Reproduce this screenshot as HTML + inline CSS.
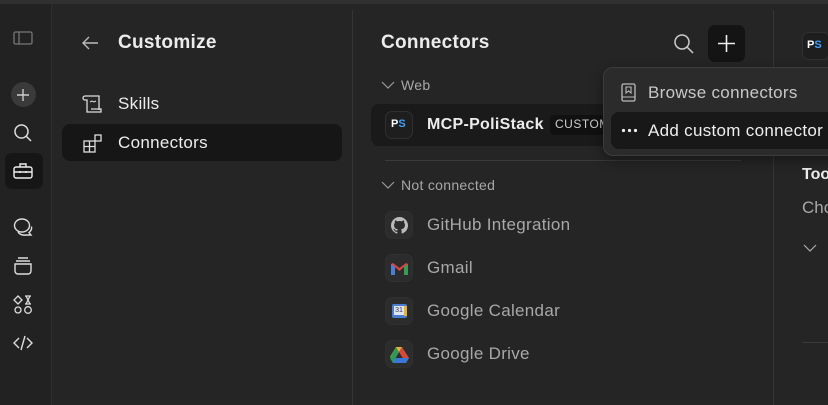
<!DOCTYPE html>
<html><head><meta charset="utf-8"><style>
*{box-sizing:border-box;margin:0;padding:0}
body{width:828px;height:405px;overflow:hidden;background:#252525;font-family:"Liberation Sans",sans-serif;color:#ececec;position:relative}
.top{position:absolute;left:0;top:0;width:828px;height:4px;background:#303030}
.rail{position:absolute;left:0;top:4px;width:52px;height:401px;background:#222222;border-right:1px solid #2e2e2e}
.vline{position:absolute;top:10px;width:1px;height:395px;background:#353535}
.abs{position:absolute}
.sel{position:absolute;left:62px;top:124px;width:280px;height:37px;background:#161616;border-radius:8px}
.t{position:absolute;white-space:nowrap}
.logo{position:absolute;left:385px;width:28px;height:28px;border-radius:7px;background:#2c2c2c;border:1px solid #303030}
.gray{color:#a8a8a8}
</style></head><body>
<div class="top"></div>
<div class="rail"></div>
<div class="vline" style="left:352px"></div>
<div class="vline" style="left:773px"></div>
<svg class="abs" style="left:13px;top:31px" width="20" height="15"><rect x="1" y="1" width="18" height="12" rx="1.5" fill="none" stroke="#777" stroke-width="1.3"/><line x1="6" y1="1" x2="6" y2="13" stroke="#777" stroke-width="1.3"/></svg>
<div class="abs" style="left:11px;top:82px;width:25px;height:25px;border-radius:50%;background:#3a3a3a"></div>
<svg class="abs" style="left:15px;top:87px" width="16" height="16"><path d="M8 2v12M2 8h12" stroke="#ccc" stroke-width="1.4"/></svg>
<svg class="abs" style="left:13px;top:123px" width="20" height="20"><circle cx="8.5" cy="8.5" r="6.5" fill="none" stroke="#ddd" stroke-width="1.5"/><path d="M13 13l5 5" stroke="#ddd" stroke-width="1.5"/></svg>
<div class="abs" style="left:5px;top:153px;width:38px;height:36px;background:#161616;border-radius:7px"></div>
<svg class="abs" style="left:13px;top:162px" width="20" height="18"><rect x="1" y="5" width="18" height="11" rx="2" fill="none" stroke="#eee" stroke-width="1.4"/><path d="M7 5V2h6v3M1 10h18M7 9v2M13 9v2" stroke="#eee" stroke-width="1.4" fill="none"/></svg>
<svg class="abs" style="left:13px;top:217px" width="21" height="21"><ellipse cx="9" cy="8.5" rx="7.5" ry="6.5" fill="none" stroke="#ddd" stroke-width="1.4"/><path d="M5 14.5c1 3 5 4 8 3.5h5l-2-2.5c2-1.5 3-3.5 2.5-6" fill="none" stroke="#ddd" stroke-width="1.4"/></svg>
<svg class="abs" style="left:13px;top:256px" width="20" height="20"><path d="M5 2h10M3 5h14M2 8h16v7a3 3 0 0 1-3 3H5a3 3 0 0 1-3-3z" fill="none" stroke="#ddd" stroke-width="1.4"/></svg>
<svg class="abs" style="left:13px;top:295px" width="20" height="20"><path d="M5 1l4 4-4 4-4-4z M12 1h6M12 9h6M13 1l2 4-2 4M17 1l-2 4 2 4" fill="none" stroke="#ddd" stroke-width="1.3"/><circle cx="5" cy="15" r="3" fill="none" stroke="#ddd" stroke-width="1.3"/><circle cx="15" cy="15" r="3.3" fill="none" stroke="#ddd" stroke-width="1.3"/></svg>
<svg class="abs" style="left:13px;top:335px" width="20" height="16"><path d="M6 3L1 8l5 5M14 3l5 5-5 5M12 1L8 15" fill="none" stroke="#ddd" stroke-width="1.4"/></svg>
<svg class="abs" style="left:81px;top:35px" width="18" height="16"><path d="M17 8H2M8 2L2 8l6 6" fill="none" stroke="#bbb" stroke-width="1.4"/></svg>
<div class="t" style="left:118px;top:32px;font-size:19px;font-weight:bold;letter-spacing:.3px">Customize</div>
<svg class="abs" style="left:82px;top:94px" width="21" height="20"><path d="M3 2h14v14M3 2a2 2 0 0 0 0 4h2v12h14v-3H9" fill="none" stroke="#ddd" stroke-width="1.3"/><path d="M8 8l2-1 2 1 2-1" fill="none" stroke="#ddd" stroke-width="1"/></svg>
<div class="t" style="left:118px;top:94px;font-size:17px;letter-spacing:.3px">Skills</div>
<div class="sel"></div>
<svg class="abs" style="left:83px;top:134px" width="19" height="19"><rect x="1" y="7" width="11" height="11" fill="none" stroke="#ddd" stroke-width="1.3"/><path d="M1 12.5h11M6.5 7v11" stroke="#ddd" stroke-width="1.3"/><rect x="12" y="1" width="6" height="6" fill="none" stroke="#ddd" stroke-width="1.3"/></svg>
<div class="t" style="left:118px;top:133px;font-size:17px;letter-spacing:.3px">Connectors</div>
<div class="t" style="left:381px;top:32px;font-size:19px;font-weight:bold;letter-spacing:.3px">Connectors</div>
<svg class="abs" style="left:673px;top:33px" width="22" height="22"><circle cx="9" cy="9" r="7" fill="none" stroke="#ccc" stroke-width="1.5"/><path d="M14 14l6 6" stroke="#ccc" stroke-width="1.5"/></svg>
<div class="abs" style="left:708px;top:25px;width:37px;height:37px;background:#141414;border-radius:7px"></div>
<svg class="abs" style="left:716px;top:33px" width="21" height="21"><path d="M10.5 2v17M2 10.5h17" stroke="#eee" stroke-width="1.6"/></svg>
<svg class="abs" style="left:381px;top:80px" width="14" height="10"><path d="M1 2l6 6 6-6" fill="none" stroke="#999" stroke-width="1.2"/></svg>
<div class="t gray" style="left:401px;top:77px;font-size:14px;letter-spacing:.3px">Web</div>
<div class="abs" style="left:371px;top:104px;width:260px;height:42px;background:#1a1a1a;border-radius:8px"></div>
<div class="logo" style="top:111px;background:#1e1e1e"><div class="t" style="left:5px;top:6px;font-size:11px;font-weight:bold;color:#fff">P<span style="color:#3ea0ff">S</span></div></div>
<div class="t" style="left:427px;top:116px;font-size:16px;font-weight:bold;letter-spacing:.3px">MCP-PoliStack</div>
<div class="abs" style="left:550px;top:115px;width:60px;height:20px;background:#111;border-radius:4px"></div>
<div class="t" style="left:555px;top:117px;font-size:12px;color:#ccc;letter-spacing:.5px">CUSTOM</div>
<div class="abs" style="left:385px;top:160px;width:356px;height:1px;background:#3a3a3a"></div>
<svg class="abs" style="left:381px;top:180px" width="14" height="10"><path d="M1 2l6 6 6-6" fill="none" stroke="#999" stroke-width="1.2"/></svg>
<div class="t gray" style="left:401px;top:177px;font-size:14px;letter-spacing:.3px">Not connected</div>
<div class="logo" style="top:211px"><svg style="position:absolute;left:5px;top:5px" width="17" height="17" viewBox="0 0 16 16"><path fill="#bbb" d="M8 0C3.6 0 0 3.6 0 8c0 3.5 2.3 6.5 5.5 7.6.4.1.5-.2.5-.4v-1.4c-2.2.5-2.7-1-2.7-1-.4-.9-.9-1.2-.9-1.2-.7-.5.1-.5.1-.5.8.1 1.2.8 1.2.8.7 1.200 1.9.9 2.3.7.1-.5.3-.9.5-1.1-1.8-.2-3.6-.9-3.6-4 0-.9.3-1.6.8-2.1-.1-.2-.4-1 .1-2.1 0 0 .7-.2 2.2.8.6-.2 1.3-.3 2-.3s1.4.1 2 .3c1.5-1 2.2-.8 2.2-.8.4 1.1.2 1.9.1 2.1.5.6.8 1.3.8 2.1 0 3.1-1.9 3.7-3.6 3.9.3.3.5.8.5 1.5v2.2c0 .2.1.5.6.4C13.7 14.5 16 11.5 16 8c0-4.4-3.6-8-8-8z"/></svg></div>
<div class="t gray" style="left:427px;top:215px;font-size:17px;letter-spacing:.3px">GitHub Integration</div>
<div class="logo" style="top:254px"><svg style="position:absolute;left:5px;top:7px" width="17" height="13"><path d="M0 2v11h4V5l4.5 4L13 5v8h4V2l-2-1-6.5 5L2 1z" fill="#d44"/><path d="M0 2v11h4V5z" fill="#4a7fd8"/><path d="M13 5v8h4V2z" fill="#3a9a5a"/></svg></div>
<div class="t gray" style="left:427px;top:258px;font-size:17px;letter-spacing:.3px">Gmail</div>
<div class="logo" style="top:297px"><div class="abs" style="left:6px;top:6px;width:15px;height:14px;background:#4a7cd0;border-radius:2px"></div><div class="abs" style="left:8px;top:8px;width:10px;height:9px;background:#dfe6f0;font-size:7px;color:#335;text-align:center;line-height:9px">31</div><div class="abs" style="left:18px;top:8px;width:3px;height:10px;background:#e8b33a"></div></div>
<div class="t gray" style="left:427px;top:301px;font-size:17px;letter-spacing:.3px">Google Calendar</div>
<div class="logo" style="top:340px"><svg style="position:absolute;left:4px;top:6px" width="19" height="16"><path d="M6 0h6l-6 10H0z" fill="#e8b33a"/><path d="M12 0l7 11-3 5-7-11z" fill="#d4493a"/><path d="M0 11l3 5h13l3-5z" fill="#3a78d8"/><path d="M6 0L0 11l3 5 6-11z" fill="#2e9a5a"/></svg></div>
<div class="t gray" style="left:427px;top:344px;font-size:17px;letter-spacing:.3px">Google Drive</div>
<div class="logo" style="left:802px;top:32px;background:#1e1e1e"><div class="t" style="left:4px;top:6px;font-size:11px;font-weight:bold;color:#fff">P<span style="color:#3ea0ff">S</span></div></div>
<div class="t" style="left:802px;top:166px;font-size:16px;font-weight:bold">Tools</div>
<div class="t gray" style="left:802px;top:198px;font-size:17px">Choose</div>
<svg class="abs" style="left:803px;top:243px" width="14" height="10"><path d="M1 2l6 6 6-6" fill="none" stroke="#aaa" stroke-width="1.2"/></svg>
<div class="abs" style="left:802px;top:342px;width:26px;height:1px;background:#3a3a3a"></div>
<div class="abs" style="left:603px;top:67px;width:240px;height:89px;background:#2b2b2b;border:1px solid #3c3c3c;border-radius:10px;box-shadow:0 4px 12px rgba(0,0,0,.4)"></div>
<svg class="abs" style="left:621px;top:83px" width="16" height="20"><rect x="1" y="1" width="13" height="17" rx="1.5" fill="none" stroke="#bbb" stroke-width="1.3"/><path d="M1 14h13M5 4v6l2.5-2 2.5 2V4z" fill="none" stroke="#bbb" stroke-width="1.1"/></svg>
<div class="t" style="left:648px;top:83px;font-size:17px;color:#c8c8c8;letter-spacing:.3px">Browse connectors</div>
<div class="abs" style="left:611px;top:112px;width:230px;height:37px;background:#181818;border-radius:8px"></div>
<svg class="abs" style="left:621px;top:128px" width="18" height="5"><circle cx="2.5" cy="2.5" r="1.6" fill="#eee"/><circle cx="8.5" cy="2.5" r="1.6" fill="#eee"/><circle cx="14.5" cy="2.5" r="1.6" fill="#eee"/></svg>
<div class="t" style="left:648px;top:121px;font-size:17px;color:#eee;letter-spacing:.3px">Add custom connector</div>
</body></html>
